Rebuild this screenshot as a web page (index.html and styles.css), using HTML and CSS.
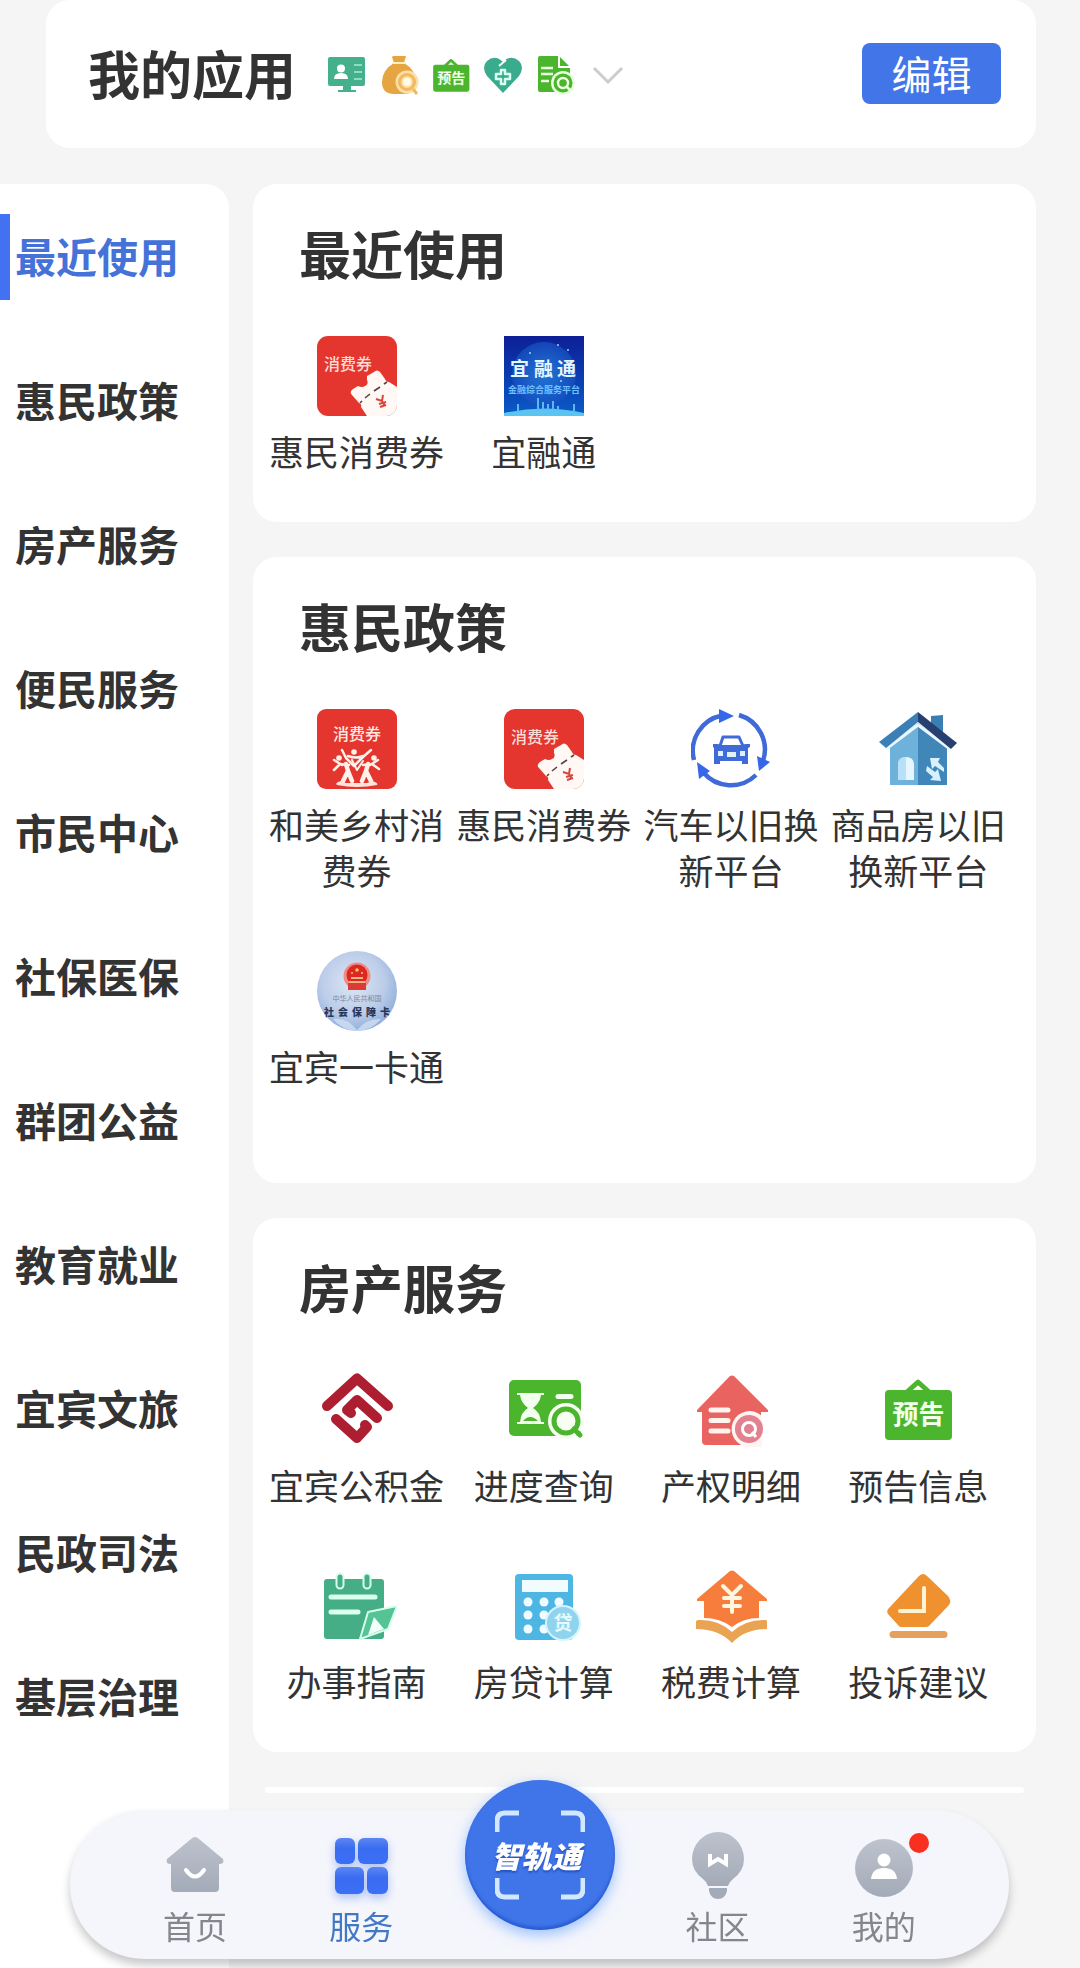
FILE: index.html
```html
<!DOCTYPE html>
<html lang="zh-CN">
<head>
<meta charset="utf-8">
<meta name="viewport" content="width=device-width, initial-scale=1">
<title>服务</title>
<link rel="stylesheet" href="styles.css">
</head>
<body>
<svg class="defs" aria-hidden="true">
  <defs>
    <linearGradient id="grayFill" x1="0" y1="0" x2="0" y2="1"><stop offset="0" stop-color="#bcc3cd"/><stop offset="1" stop-color="#a4abb8"/></linearGradient>
    <linearGradient id="blueFill" x1="0" y1="0" x2="0" y2="1"><stop offset="0" stop-color="#5c86f2"/><stop offset="0.4" stop-color="#3a6cf0"/><stop offset="1" stop-color="#3b6ff6"/></linearGradient>
    <radialGradient id="cardFill" cx="0.45" cy="0.4" r="0.6"><stop offset="0" stop-color="#dde6f4"/><stop offset="0.65" stop-color="#bccde9"/><stop offset="1" stop-color="#94b0dc"/></radialGradient>
    <linearGradient id="nightFill" x1="0" y1="0" x2="0" y2="1"><stop offset="0" stop-color="#0d1f96"/><stop offset="0.6" stop-color="#0a42b4"/><stop offset="1" stop-color="#0b5cc8"/></linearGradient>
    <radialGradient id="globeFill"><stop offset="0" stop-color="#2a86e0"/><stop offset="1" stop-color="#1650c0"/></radialGradient>
    <symbol id="coupon" viewBox="0 0 80 80">
      <rect width="80" height="80" rx="11" fill="#e4362e"/>
      <text x="7" y="34" font-size="16" fill="#fbdcd8" font-weight="500">消费券</text>
      <path d="M57 36q3-3 6 0l5 7q1 3 4 3l8 5v18a11 11 0 0 1-11 11H50L44 71q1-3-2-4l-7-8q-3-3 1-6l5-3q4 2 7 0 4-2 2-6v-4z" fill="#fff8f4"/>
      <path d="M48 62l5-4M57 55l6-4M43 67l2-2M67 48l3-2" stroke="#5a4040" stroke-width="1.6"/>
      <path d="M59 63l6 2 1-6M65 65l3 5M62 68l7-2M63 71l6-2" stroke="#d8453f" stroke-width="2" fill="none"/>
    </symbol>
    <symbol id="notice" viewBox="0 0 80 80">
      <path d="M29 22L40 12l11 10" fill="none" stroke="#4cb52e" stroke-width="5" stroke-linejoin="round"/>
      <rect x="7" y="20" width="67" height="50" rx="4" fill="#4cb52e"/>
      <text x="40.500" y="54" font-size="26" font-weight="700" fill="#f1ffec" text-anchor="middle">预告</text>
    </symbol>
  </defs>
</svg>

<header class="topbar">
  <h1 class="title">我的应用</h1>
  <div class="shortcuts">
    <svg viewBox="0 0 40 40"><path d="M3 1h33q2 0 2 2v25q0 2-2 2H24v4h5v2H11v-2h5v-4H3q-2 0-2-2V3q0-2 2-2z" fill="#45b08c"/><circle cx="14" cy="12.500" r="4" fill="#fff"/><path d="M7 23q0-6 7-6t7 6z" fill="#fff"/><path d="M27 9h8M27 16h8M27 23h8" stroke="#8fdcbe" stroke-width="2"/></svg>
    <svg viewBox="0 0 40 40"><path d="M14 0h13l-2 7q12 7 12 19 0 12-12 12H15Q3 38 3 26 3 14 15 7L13 1z" fill="#e5a540"/><path d="M13 7h14" stroke="#fff0c8" stroke-width="2"/><circle cx="28" cy="26" r="11.500" fill="#fbdfa6"/><circle cx="28" cy="26" r="7.500" fill="none" stroke="#f0b95e" stroke-width="3"/><circle cx="28" cy="26" r="4" fill="#fffbe8"/><path d="M34 33l4 5" stroke="#f0b95e" stroke-width="3"/></svg>
    <svg viewBox="3 4 74 74"><use href="#notice" width="80" height="80"/></svg>
    <svg viewBox="0 0 40 40"><path d="M20 37L4 20Q-2 11 4 5 12-2 20 6q8-8 16-1 6 6 0 15z" fill="#3aab8d"/><path d="M16 10l7-6" stroke="#fff" stroke-width="2"/><path d="M18 14h4v4h5v5h-5v5h-4v-5h-5v-5h5z" fill="#3aab8d" stroke="#d8fff0" stroke-width="2.500" stroke-linejoin="round"/></svg>
    <svg viewBox="0 0 40 40"><path d="M5 0h18v12h12v24H5q-2 0-2-2V2q0-2 2-2z" fill="#4cb52e"/><path d="M25 1l9 9h-9z" fill="#4cb52e"/><path d="M6 12h12M6 18h12M6 25h8" stroke="#eaffdf" stroke-width="2.500"/><circle cx="28" cy="27" r="12" fill="#eaffdf"/><circle cx="28" cy="27" r="9.500" fill="#4cb52e"/><circle cx="28" cy="27" r="5" fill="none" stroke="#eaffdf" stroke-width="2.500"/><path d="M31 30l4 4" stroke="#eaffdf" stroke-width="2.500"/></svg>
    <svg viewBox="0 0 40 40"><path d="M7 12l14 14 14-14" fill="none" stroke="#ccc" stroke-width="3"/></svg>
  </div>
  <button class="edit" type="button">编辑</button>
</header>

<div class="layout">
  <nav class="side" aria-label="分类">
    <a class="side-item active" href="#recent">最近使用</a>
    <a class="side-item" href="#policy">惠民政策</a>
    <a class="side-item" href="#house">房产服务</a>
    <a class="side-item" href="#">便民服务</a>
    <a class="side-item" href="#">市民中心</a>
    <a class="side-item" href="#">社保医保</a>
    <a class="side-item" href="#">群团公益</a>
    <a class="side-item" href="#">教育就业</a>
    <a class="side-item" href="#">宜宾文旅</a>
    <a class="side-item" href="#">民政司法</a>
    <a class="side-item" href="#">基层治理</a>
  </nav>

  <main class="panels">
    <section class="panel" id="recent">
      <h2 class="title">最近使用</h2>
      <div class="apps">
        <a class="app" href="#"><svg viewBox="0 0 80 80"><use href="#coupon"/></svg><span>惠民消费券</span></a>
        <a class="app" href="#"><svg viewBox="0 0 80 80">
          <rect width="80" height="80" fill="url(#nightFill)"/>
          <circle cx="40" cy="38" r="32" fill="url(#globeFill)" opacity="0.75"/>
          <path d="M0 80v-3q40-9 80 0v3z" fill="#5cc4f0"/>
          <path d="M14 76v-8M34 74V62M39 74V66M44 74v-6M49 74v-9M54 74v-4M70 76v-8" stroke="#5cb8f4" stroke-width="2"/>
          <path d="M53 9h2M63 14h2M25 17h2M33 25h2M56 45h2" stroke="#9fd4ff" stroke-width="1.500"/>
          <text x="6" y="40" font-size="19" font-weight="700" fill="#e4f6ff">宜</text><text x="30" y="40" font-size="19" font-weight="700" fill="#e4f6ff">融</text><text x="53" y="40" font-size="19" font-weight="700" fill="#e4f6ff">通</text>
          <text x="40" y="57" font-size="9" font-weight="700" fill="#6ec0ff" text-anchor="middle">金融综合服务平台</text>
        </svg><span>宜融通</span></a>
      </div>
    </section>

    <section class="panel" id="policy">
      <h2 class="title">惠民政策</h2>
      <div class="apps">
        <a class="app" href="#"><svg viewBox="0 0 80 80">
          <rect width="80" height="80" rx="9" fill="#e4362e"/>
          <text x="40" y="31" font-size="16" font-weight="500" fill="#ffe8e4" text-anchor="middle">消费券</text>
          <g fill="none" stroke="#fff0ea" stroke-linecap="round" stroke-linejoin="round"><path d="M25 41l4 8 8 8 9-9 8-7M31 47q8 3 15 0M17 61l6-6 9 1M17 51l8 5M62 60l-7-5-9 1M61 51l-8 5" stroke-width="2.500"/><path d="M29 55l2 7-5 10M31 62l4 10M51 55l-2 7 5 10M49 62l-4 10" stroke-width="4.500"/><path d="M35 51l5 10 6-9" stroke-width="2"/></g>
          <circle cx="37" cy="43" r="2.800" fill="#fff0ea"/><circle cx="22" cy="49" r="2.800" fill="#fff0ea"/><circle cx="57" cy="49" r="2.800" fill="#fff0ea"/>
          <path d="M24 72q-7 2-4 4 20 4 40 0 2-2-5-4l-5 2H29z" fill="#ffe4dc"/>
        </svg><span>和美乡村消费券</span></a>
        <a class="app" href="#"><svg viewBox="0 0 80 80"><use href="#coupon"/></svg><span>惠民消费券</span></a>
        <a class="app" href="#"><svg viewBox="0 0 80 80">
          <g fill="none" stroke="#3f6ad8" stroke-width="4.500"><path d="M3 51A36 36 0 0 1 31 6.500M48 6a36 36 0 0 1 24 46M12 63a36 36 0 0 0 53 3"/></g>
          <path d="M28 0l15 7-15 7zM79 53L68 62l-2-15zM6 53l13 9-11 8z" fill="#3567e8"/>
          <path d="M29 37l3-9h16l4 9" fill="none" stroke="#3f6ad8" stroke-width="3" stroke-linejoin="round"/>
          <path d="M22 35h5l2 1h23l2-1h5v3l-2 1v16h-6v-3H29v3h-6V39l-1-1z" fill="#3f6ad8"/>
          <path d="M27 42h5v5h-5zM49 42h5v5h-5zM36 43h9v5h-9z" fill="#dff0ff"/>
        </svg><span>汽车以旧换新平台</span></a>
        <a class="app" href="#"><svg viewBox="0 0 80 80">
          <path d="M53 7l12-1v24L53 19z" fill="#397fb4"/>
          <path d="M12 38l28-24v62H12z" fill="#6eb2dc"/><path d="M40 14l29 24v38H40z" fill="#4186b8"/>
          <path d="M8 40l32-24 32 24" fill="none" stroke="#e8f6ff" stroke-width="3"/>
          <path d="M40 3v10L8 39l-7-6z" fill="#3a7fb6"/><path d="M40 3l39 31-6 6-33-27z" fill="#28406f"/>
          <path d="M20 71V56q0-8 8-8t8 8v15z" fill="#e6f6ff"/><path d="M20 71V56q0-8 8-8v23z" fill="#b8e0f6"/>
          <path d="M52 49h10l-2 4 6 6v4l-9-6-3 3zM49 57l8 6 3-3 3 12-11-1 3-3-7-6z" fill="#d5f0ff"/>
        </svg><span>商品房以旧换新平台</span></a>
        <a class="app" href="#"><svg viewBox="0 0 80 80">
          <circle cx="40" cy="40" r="40" fill="url(#cardFill)"/>
          <path d="M16 68q14-2 24 11 10-12 24-11-10 12-24 12T16 68z" fill="#cfdff3" opacity="0.8"/>
          <circle cx="40" cy="25" r="13.500" fill="#f08a84"/><circle cx="40" cy="24" r="10.500" fill="#dc2823"/>
          <path d="M31 32h18v7H31z" fill="#dc3a34"/><path d="M34 27h12M32 31h16" stroke="#f7b080" stroke-width="2"/><circle cx="40" cy="19" r="1.800" fill="#f9c26a"/><circle cx="35" cy="22" r="1" fill="#f9c26a"/><circle cx="45" cy="22" r="1" fill="#f9c26a"/>
          <text x="40" y="50" font-size="7" fill="#7a88a4" text-anchor="middle">中华人民共和国</text>
          <g font-size="10" font-weight="900" fill="#26385c" text-anchor="middle"><text x="12" y="65">社</text><text x="26" y="65">会</text><text x="40" y="65">保</text><text x="54" y="65">障</text><text x="68" y="65">卡</text></g>
        </svg><span>宜宾一卡通</span></a>
      </div>
    </section>

    <section class="panel" id="house">
      <h2 class="title">房产服务</h2>
      <div class="apps">
        <a class="app" href="#"><svg viewBox="0 0 80 80">
          <g fill="none" stroke="#ad1f30" stroke-width="10" stroke-linecap="round" stroke-linejoin="round"><path d="M10 36L40 8.500 71 36"/><path d="M34 43l-4-3 10-10 20 18"/><path d="M19 49l21 19 10-11-2-2"/></g>
        </svg><span>宜宾公积金</span></a>
        <a class="app" href="#"><svg viewBox="0 0 80 80">
          <rect x="5" y="10" width="72" height="56" rx="5" fill="#4cb52e"/>
          <path d="M13 23h27v2h-3q-1 8-8 13 7 4 8 14h3v2H13v-2h3q1-10 8-14-7-5-8-13h-3z" fill="#f3ffee"/><path d="M19 51q7-8 15 0z" fill="#4cb52e"/>
          <path d="M54 26.500h13" stroke="#f3ffee" stroke-width="5" stroke-linecap="round"/>
          <circle cx="62" cy="51" r="18" fill="#f6fff2"/><circle cx="62" cy="51" r="12" fill="none" stroke="#4cb52e" stroke-width="5"/><path d="M70 59l6 6" stroke="#4cb52e" stroke-width="5" stroke-linecap="round"/>
        </svg><span>进度查询</span></a>
        <a class="app" href="#"><svg viewBox="0 0 80 80">
          <path d="M39 6q2-1 4 0l34 34v2h-7v33H15q-4 0-4-4V42H6v-2z" fill="#e96360"/>
          <path d="M20 40h17M20 50.500h17M20 61h17" stroke="#fff4f0" stroke-width="5" stroke-linecap="round"/>
          <path d="M58 77a18 18 0 1 1 13-31v31z" fill="#fff4f2"/><circle cx="58" cy="59" r="14" fill="#e28290"/><circle cx="58" cy="59" r="6.500" fill="none" stroke="#fff" stroke-width="3"/><path d="M61 62l4 5" stroke="#fff" stroke-width="3"/>
        </svg><span>产权明细</span></a>
        <a class="app" href="#"><svg viewBox="0 0 80 80"><use href="#notice"/></svg><span>预告信息</span></a>
        <a class="app" href="#"><svg viewBox="0 0 80 80">
          <rect x="7" y="13" width="60" height="60" rx="3" fill="#45ae86"/>
          <g stroke-linecap="round"><path d="M23 11v8M50 11v8" stroke="#d5ffec" stroke-width="9"/><path d="M23 11v8M50 11v8" stroke="#45ae86" stroke-width="5"/><path d="M14 31h44M14 46h27" stroke="#d9fff0" stroke-width="5"/></g>
          <path d="M80 40l-9 23-28 10 8-27z" fill="#54c494" stroke="#d5ffec" stroke-width="2" stroke-linejoin="round"/><path d="M57 51l10 12-16 6z" fill="#f2fffa"/>
        </svg><span>办事指南</span></a>
        <a class="app" href="#"><svg viewBox="0 0 80 80">
          <rect x="11" y="8" width="58" height="66" rx="4" fill="#4db6e2"/><path d="M18 14h46v12H18z" fill="#f0fcff"/>
          <g fill="#f0fcff"><circle cx="24" cy="36" r="4.500"/><circle cx="40" cy="36" r="4.500"/><circle cx="55" cy="36" r="4.500"/><circle cx="24" cy="49" r="4.500"/><circle cx="40" cy="49" r="4.500"/><circle cx="24" cy="63" r="4.500"/><circle cx="40" cy="63" r="4.500"/></g>
          <circle cx="59" cy="57" r="18" fill="#d5f4fd"/><circle cx="59" cy="57" r="16" fill="#8fd3ec"/><text x="59" y="64" font-size="19" font-weight="700" fill="#e6faff" text-anchor="middle">贷</text>
        </svg><span>房贷计算</span></a>
        <a class="app" href="#"><svg viewBox="0 0 80 80">
          <path d="M39 5q2-1 4 0l33 28v2h-8v17q-16 0-27 9-12-9-28-9V35H6v-2z" fill="#f77d3c"/>
          <path d="M32 20l9 9 9-9M33 32h16M33 40h16M41 30v16" fill="none" stroke="#fff6e0" stroke-width="4" stroke-linecap="round"/>
          <path d="M7 54q20-1 34 12 14-13 34-12 1 0 1 2v7Q54 63 41 77 28 63 5 63v-7q0-2 2-2z" fill="#e9a352"/>
        </svg><span>税费计算</span></a>
        <a class="app" href="#"><svg viewBox="0 0 80 80">
          <path d="M41 10q4-4 8 0l21 20q4 5 1 9L51 60q-1 1-3 1H23q-2 0-3-2L10 48q-2-3 1-6z" fill="#f0912f"/>
          <path d="M46 22v23H22" fill="none" stroke="#fff3d4" stroke-width="4" stroke-linecap="round"/><path d="M15 68.500h51" stroke="#e5a05c" stroke-width="7" stroke-linecap="round"/>
        </svg><span>投诉建议</span></a>
      </div>
    </section>
    <div class="panel-edge"></div>
  </main>
</div>

<nav class="tabbar" aria-label="主导航">
  <a class="tab" href="#"><svg viewBox="0 0 70 70"><path d="M31 9q4-4 8 0l24 20q2 5-4 5v24q0 4-4 4H15q-4 0-4-4V34q-6 0-4-5z" fill="url(#grayFill)"/><path d="M26 40q9 13 18 0" fill="none" stroke="#fff" stroke-width="4" stroke-linecap="round"/></svg><span>首页</span></a>
  <a class="tab active" href="#"><svg viewBox="0 0 70 70"><g fill="url(#blueFill)"><rect x="9" y="8" width="20" height="26" rx="6"/><rect x="32" y="8" width="30" height="26" rx="6"/><rect x="9" y="37" width="29" height="27" rx="6"/><rect x="41" y="37" width="21" height="27" rx="6"/></g></svg><span>服务</span></a>
  <div class="scan-slot">
    <a class="scan" href="#"><svg viewBox="0 0 90 90"><path d="M2 22V11q0-8 8-8h14M66 3h14q8 0 8 8v11M88 68v11q0 8-8 8H66M24 87H10q-8 0-8-8V68" fill="none" stroke="#d3e7ff" stroke-width="5"/></svg><span>智轨通</span></a>
  </div>
  <a class="tab" href="#"><svg viewBox="0 0 70 70"><path d="M35 2a26 27 0 0 1 26 27q0 12-11 20-4 3-5 7H25q-1-4-5-7Q9 41 9 29A26 27 0 0 1 35 2z" fill="url(#grayFill)"/><path d="M26 58h18v3q-2 8-9 8t-9-8z" fill="#a4abb8"/><path d="M27 24v10l8-5 8 5V24" fill="none" stroke="#fff" stroke-width="4"/></svg><span>社区</span></a>
  <a class="tab" href="#"><svg viewBox="0 0 70 70"><circle cx="35" cy="38" r="29" fill="url(#grayFill)"/><circle cx="35" cy="30" r="6.500" fill="#fff"/><path d="M22 49q1-11 13-11t13 11z" fill="#fff"/><circle cx="70" cy="13" r="10" fill="#f92f20"/></svg><span>我的</span></a>
</nav>
</body>
</html>
```
FILE: styles.css
```css
* {
  box-sizing: border-box;
}

body {
  margin: 0;
  min-height: 100vh;
  display: flex;
  flex-direction: column;
  background: #f5f5f5;
  color: #333;
  font-family: "Noto Sans CJK SC", "Noto Sans", sans-serif;
}

a {
  color: inherit;
  text-decoration: none;
}

.defs {
  position: absolute;
  width: 0;
  height: 0;
}

.title {
  margin: 0;
  font-size: 52px;
  line-height: 72px;
  font-weight: 700;
}

.topbar {
  display: flex;
  align-items: center;
  margin: 0 44px 36px 46px;
  padding: 37px 35px 39px 42px;
  border-radius: 24px;
  background: #fff;
}

.shortcuts {
  display: flex;
  gap: 12px;
  margin-left: 31px;
  padding-top: 6px;
}

.shortcuts svg {
  width: 40px;
  height: 40px;
}

.edit {
  margin-left: auto;
  width: 139px;
  height: 61px;
  padding: 0;
  border: 0;
  border-radius: 8px;
  background: #4275e8;
  color: #fff;
  font: inherit;
  font-size: 40px;
  line-height: 60px;
}

.layout {
  flex: 1;
  display: flex;
  gap: 24px;
  padding-right: 44px;
}

.side {
  flex: none;
  width: 229px;
  padding-top: 2px;
  border-top-right-radius: 24px;
  background: #fff;
}

.side-item {
  position: relative;
  display: block;
  padding: 0 0 6px 15px;
  font-size: 41px;
  line-height: 138px;
  font-weight: 700;
}

.side-item.active {
  color: #4472d8;
}

.side-item.active::before {
  content: "";
  position: absolute;
  left: 0;
  top: 28px;
  width: 10px;
  height: 86px;
  background: #4271f2;
}

.panels {
  flex: 1;
  min-width: 0;
  display: flex;
  flex-direction: column;
  gap: 35px;
  padding-bottom: 175px;
}

.panel {
  padding: 33px 24px 48px 10px;
  border-radius: 24px;
  background: #fff;
}

.panel .title {
  margin: 0 0 47px 36px;
}

.apps {
  display: grid;
  grid-template-columns: repeat(4, 1fr);
  grid-auto-rows: 1fr;
  row-gap: 58px;
}

.app {
  display: flex;
  flex-direction: column;
  align-items: center;
  gap: 12px;
  padding: 0 5px;
  font-size: 35px;
  line-height: 46px;
  text-align: center;
}

.app svg {
  width: 80px;
  height: 80px;
}

.panel-edge {
  height: 6px;
  margin: 0 12px;
  border-radius: 6px;
  background: #fff;
}

.tabbar {
  position: fixed;
  left: 70px;
  right: 71px;
  bottom: 9px;
  display: grid;
  grid-template-columns: 1fr 1fr 190px 1fr 1fr;
  padding: 20px 42px 16px;
  border-radius: 75px;
  background: #f5f6fc;
  box-shadow: 0 6px 10px rgba(0, 0, 0, 0.22);
}

.tab {
  display: flex;
  flex-direction: column;
  align-items: center;
  gap: 7px;
  color: #85868b;
  font-size: 32px;
  line-height: 36px;
}

.tab.active {
  color: #4378c4;
}

.tab svg {
  width: 70px;
  height: 70px;
  overflow: visible;
}

.tab.active svg {
  filter: drop-shadow(0 4px 5px rgba(66, 117, 232, 0.4));
}

.scan-slot {
  position: relative;
}

.scan {
  position: absolute;
  left: 20px;
  top: -50px;
  width: 150px;
  height: 150px;
  display: grid;
  place-items: center;
  border-radius: 50%;
  background: #4074e9;
  box-shadow: 0 5px 14px rgba(80, 150, 255, 0.55), inset 0 -3px 3px rgba(20, 70, 190, 0.5);
}

.scan svg,
.scan span {
  grid-area: 1 / 1;
}

.scan svg {
  width: 90px;
  height: 90px;
}

.scan span {
  padding-right: 6px;
  color: #fff;
  font-size: 30px;
  line-height: 36px;
  font-weight: 900;
  font-style: italic;
  text-shadow: 0 2px 2px rgba(20, 60, 160, 0.6);
}
```
